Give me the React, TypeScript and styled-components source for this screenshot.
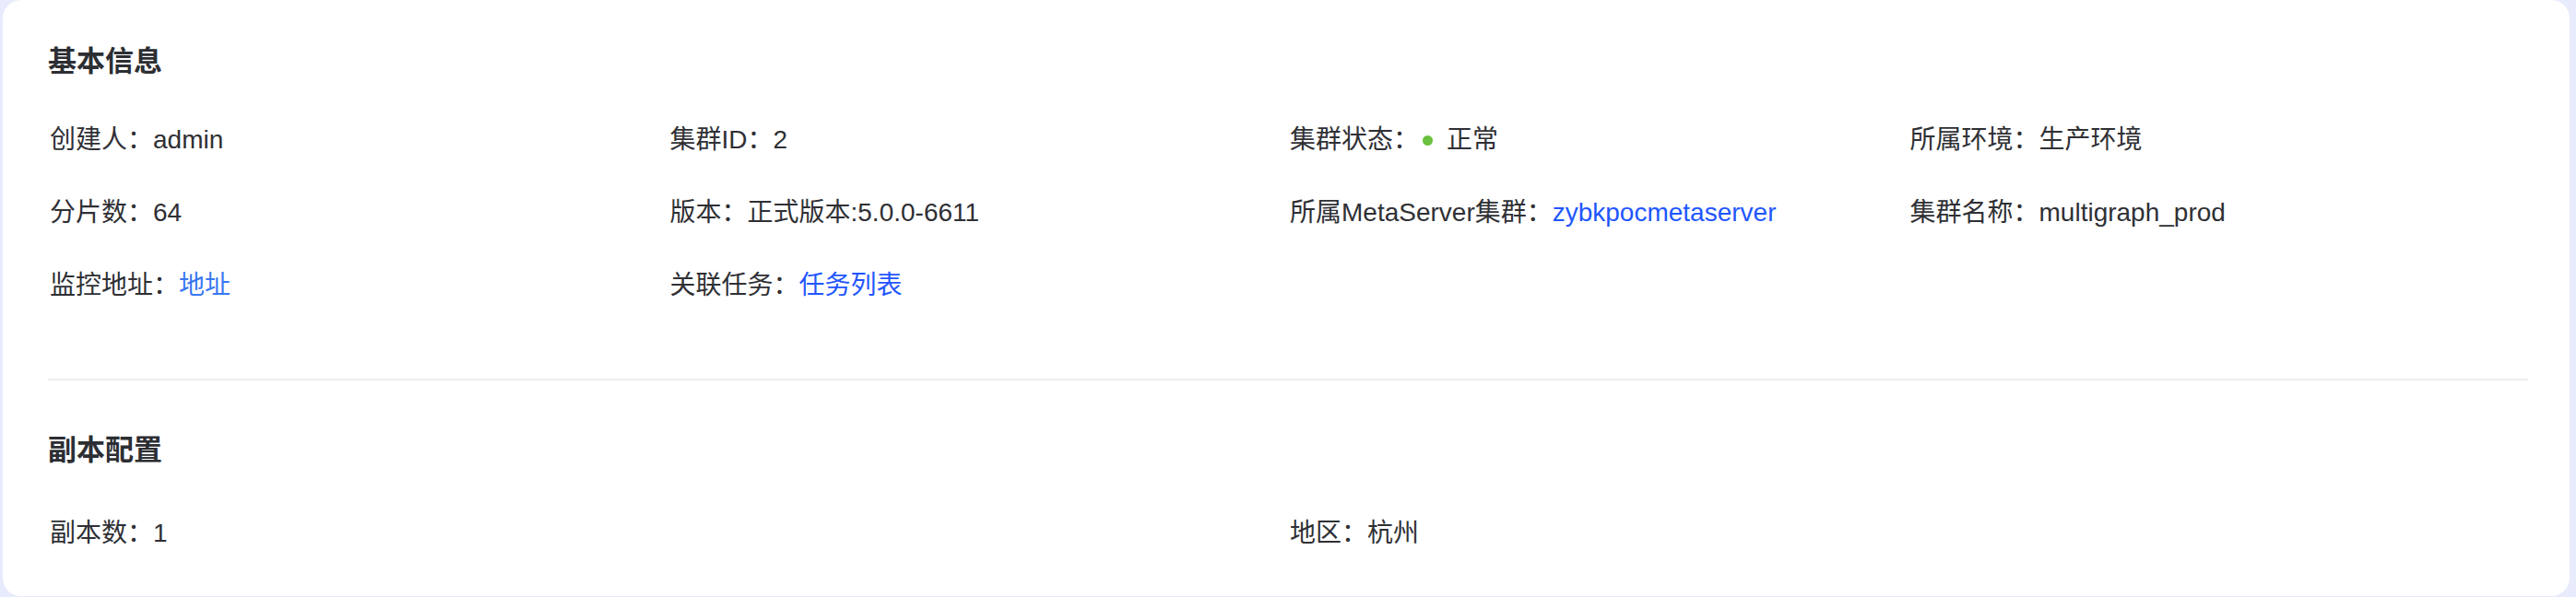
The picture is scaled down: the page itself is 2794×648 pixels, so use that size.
import React from "react";
import styled, { createGlobalStyle } from "styled-components";

const GlobalStyle = createGlobalStyle`
  html, body {
    margin: 0;
    padding: 0;
    background: #e8ebfc;
  }
  #root {
    padding: 0 7px 1px 3px;
  }
`;

const Card = styled.div`
  background: #ffffff;
  border-radius: 20px;
  padding: 42px 45px 48px 49px;
  font-family: "Liberation Sans", "Noto Sans CJK SC", sans-serif;
  color: #2f3035;
`;

const Section = styled.section`
  display: flex;
  flex-direction: column;
`;

const Title = styled.h2`
  margin: 0;
  font-size: 31px;
  line-height: 44px;
  font-weight: 700;
  color: #2c2e33;
  font-family: "Noto Sans CJK SC", sans-serif;
`;

const Grid = styled.div<{ $cols: number }>`
  display: grid;
  grid-template-columns: repeat(${(p) => p.$cols}, 1fr);
  row-gap: 39px;
  margin-top: ${(p) => (p.$cols === 4 ? 46 : 51)}px;
`;

const Item = styled.div`
  display: flex;
  align-items: center;
  font-size: 28px;
  line-height: 40px;
  white-space: nowrap;
  padding-left: 2px;
`;

const Label = styled.span`
  color: #2f3035;
`;

const Value = styled.span`
  color: #2f3035;
`;

const Link = styled.a<{ $light?: boolean }>`
  color: ${(p) => (p.$light ? "#3877f2" : "#1f56ff")};
  text-decoration: none;
  cursor: pointer;
`;

const Dot = styled.span`
  display: inline-block;
  width: 11px;
  height: 11px;
  border-radius: 50%;
  background: #6ac13d;
  margin: 0 15px 0 4px;
`;

const Divider = styled.hr`
  border: none;
  height: 2px;
  background: #eeeff2;
  margin: 81px 0 51px 0;
`;

export default function App() {
  return (
    <>
      <GlobalStyle />
      <Card>
        <Section>
          <Title>基本信息</Title>
          <Grid $cols={4}>
            <Item>
              <Label>创建人：</Label>
              <Value>admin</Value>
            </Item>
            <Item>
              <Label>集群ID：</Label>
              <Value>2</Value>
            </Item>
            <Item>
              <Label>集群状态：</Label>
              <Dot />
              <Value>正常</Value>
            </Item>
            <Item>
              <Label>所属环境：</Label>
              <Value>生产环境</Value>
            </Item>
            <Item>
              <Label>分片数：</Label>
              <Value>64</Value>
            </Item>
            <Item>
              <Label>版本：</Label>
              <Value>正式版本:5.0.0-6611</Value>
            </Item>
            <Item>
              <Label>所属MetaServer集群：</Label>
              <Link>zybkpocmetaserver</Link>
            </Item>
            <Item>
              <Label>集群名称：</Label>
              <Value>multigraph_prod</Value>
            </Item>
            <Item>
              <Label>监控地址：</Label>
              <Link $light>地址</Link>
            </Item>
            <Item>
              <Label>关联任务：</Label>
              <Link>任务列表</Link>
            </Item>
          </Grid>
        </Section>
        <Divider />
        <Section>
          <Title>副本配置</Title>
          <Grid $cols={2}>
            <Item>
              <Label>副本数：</Label>
              <Value>1</Value>
            </Item>
            <Item>
              <Label>地区：</Label>
              <Value>杭州</Value>
            </Item>
          </Grid>
        </Section>
      </Card>
    </>
  );
}
